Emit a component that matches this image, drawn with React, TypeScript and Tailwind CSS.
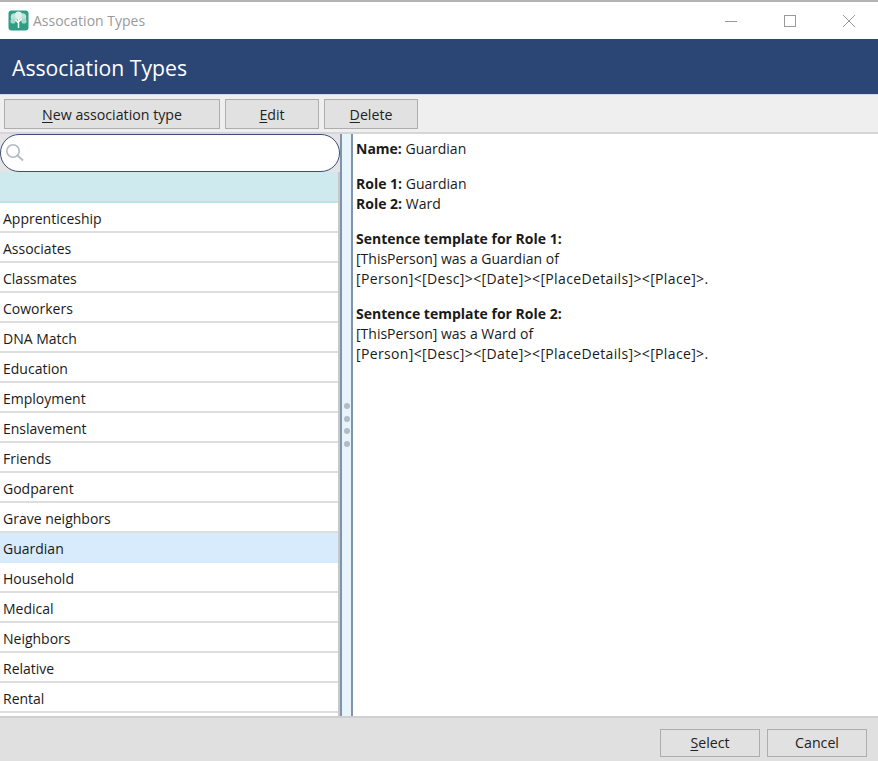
const items = [
  "Apprenticeship",
  "Associates",
  "Classmates",
  "Coworkers",
  "DNA Match",
  "Education",
  "Employment",
  "Enslavement",
  "Friends",
  "Godparent",
  "Grave neighbors",
  "Guardian",
  "Household",
  "Medical",
  "Neighbors",
  "Relative",
  "Rental",
];

const ToolButton = ({ letter, rest, className }: { letter: string; rest: string; className: string }) => (
  <button className={`border border-[#adadad] bg-[#e1e1e1] text-[14.2px] text-[#222] ${className}`}>
    <span className="underline underline-offset-2">{letter}</span>
    {rest}
  </button>
);

const AppIcon = () => (
  <svg width="21" height="21" viewBox="0 0 21 21">
    <rect x="0.5" y="0.5" width="20" height="20" rx="3" fill="#2f9c85" />
    <circle cx="6.5" cy="7" r="3.8" fill="#bfe3d9" />
    <circle cx="14.5" cy="7" r="3.8" fill="#bfe3d9" />
    <circle cx="10.5" cy="5" r="3.4" fill="#dff1ec" />
    <circle cx="5" cy="11" r="2.6" fill="#a9d8cb" />
    <circle cx="16" cy="11" r="2.6" fill="#a9d8cb" />
    <path d="M10.5 8v10M10.5 13l-3-3M10.5 12l3-3" stroke="#f4fbf9" strokeWidth="1.5" fill="none" />
  </svg>
);

export default function App() {
  return (
    <div className="flex h-[761px] w-[878px] flex-col overflow-hidden bg-white font-['Open_Sans',sans-serif] text-[14px] text-[#1a1a1a]">
      {/* window title bar */}
      <div className="flex h-[39px] shrink-0 items-center border-t-2 border-[#b4b4b4] pl-[8px]">
        <AppIcon />
        <span className="ml-[4px] text-[14px] text-[#9a9a9a]">Assocation Types</span>
        <div className="ml-auto flex items-center">
          <svg width="14" height="14" viewBox="0 0 14 14" className="mr-[45px]">
            <path d="M1 7.5h12" stroke="#9a9a9a" strokeWidth="1" />
          </svg>
          <svg width="14" height="14" viewBox="0 0 14 14" className="mr-[45px]">
            <rect x="1.5" y="1.5" width="11" height="11" fill="none" stroke="#9a9a9a" strokeWidth="1" />
          </svg>
          <svg width="14" height="14" viewBox="0 0 14 14" className="mr-[22px]">
            <path d="M1 1l12 12M13 1L1 13" stroke="#9a9a9a" strokeWidth="1" />
          </svg>
        </div>
      </div>

      {/* heading */}
      <div className="flex h-[55px] shrink-0 items-center bg-[#2b4675] pl-[12px] pt-[2px] text-[21.2px] text-white">
        Association Types
      </div>

      {/* toolbar */}
      <div className="flex h-[40px] shrink-0 items-start gap-[5px] border-b-2 border-t border-b-[#d6d6d6] border-t-[#d5d8e0] bg-[#efefef] pl-[4px] pt-[4px]">
        <ToolButton letter="N" rest="ew association type" className="h-[30px] w-[216px] pt-[2px]" />
        <ToolButton letter="E" rest="dit" className="h-[30px] w-[94px] pt-[2px]" />
        <ToolButton letter="D" rest="elete" className="h-[30px] w-[94px] pt-[2px]" />
      </div>

      {/* main area */}
      <div className="flex min-h-0 flex-1">
        <div className="flex w-[340px] shrink-0 flex-col overflow-hidden">
          <div className="h-[38px] shrink-0 bg-[#e4e4e4]">
            <div className="flex h-[38px] w-full items-center rounded-[19px] border border-[#3d4f78] bg-white pl-[5px]">
              <svg width="20" height="20" viewBox="0 0 20 20">
                <circle cx="7" cy="8" r="6.2" fill="none" stroke="#b4b9c4" strokeWidth="1.6" />
                <path d="M11.5 12.5l5.5 5" stroke="#b4b9c4" strokeWidth="1.8" />
              </svg>
            </div>
          </div>
          <div className="flex min-h-0 flex-1 flex-col overflow-hidden border-r-2 border-[#c8c8c8]">
            <div className="h-[31px] shrink-0 border-b-2 border-[#bfe3e2] bg-[#cfeaee]" />
            {items.map((name) => (
              <div
                key={name}
                className={`flex h-[30px] shrink-0 items-center border-b-2 pl-[3px] pt-[2px] text-[14px] ${
                  name === "Guardian" ? "border-[#d6eafb] bg-[#d7ebfc]" : "border-[#dedede] bg-white"
                }`}
              >
                {name}
              </div>
            ))}
          </div>
        </div>

        {/* splitter */}
        <div className="flex w-[13px] shrink-0 flex-col items-center justify-center gap-[6.5px] border-x-2 border-[#7f93ad] bg-[#e8f4fb]">
          {[0, 1, 2, 3].map((i) => (
            <span key={i} className="h-[6px] w-[6px] rounded-full bg-[#aebccb]" />
          ))}
        </div>

        {/* details */}
        <div className="flex-1 pl-[3px] pt-[5px] text-[14px] leading-[20px]">
          <p><b>Name:</b> Guardian</p>
          <p className="mt-[15px]"><b>Role 1:</b> Guardian</p>
          <p><b>Role 2:</b> Ward</p>
          <p className="mt-[15px]"><b>Sentence template for Role 1:</b></p>
          <p>[ThisPerson] was a Guardian of</p>
          <p className="tracking-[0.36px]">[Person]&lt;[Desc]&gt;&lt;[Date]&gt;&lt;[PlaceDetails]&gt;&lt;[Place]&gt;.</p>
          <p className="mt-[15px]"><b>Sentence template for Role 2:</b></p>
          <p>[ThisPerson] was a Ward of</p>
          <p className="tracking-[0.36px]">[Person]&lt;[Desc]&gt;&lt;[Date]&gt;&lt;[PlaceDetails]&gt;&lt;[Place]&gt;.</p>
        </div>
      </div>

      {/* footer */}
      <div className="flex h-[45px] shrink-0 items-start justify-end gap-[7px] border-t-2 border-[#cfcfcf] bg-[#e0e0e0] pr-[11px] pt-[11px]">
        <ToolButton letter="S" rest="elect" className="h-[28px] w-[100px]" />
        <button className="h-[28px] w-[100px] border border-[#adadad] bg-[#e1e1e1] text-[14.2px] text-[#222]">Cancel</button>
      </div>
    </div>
  );
}
